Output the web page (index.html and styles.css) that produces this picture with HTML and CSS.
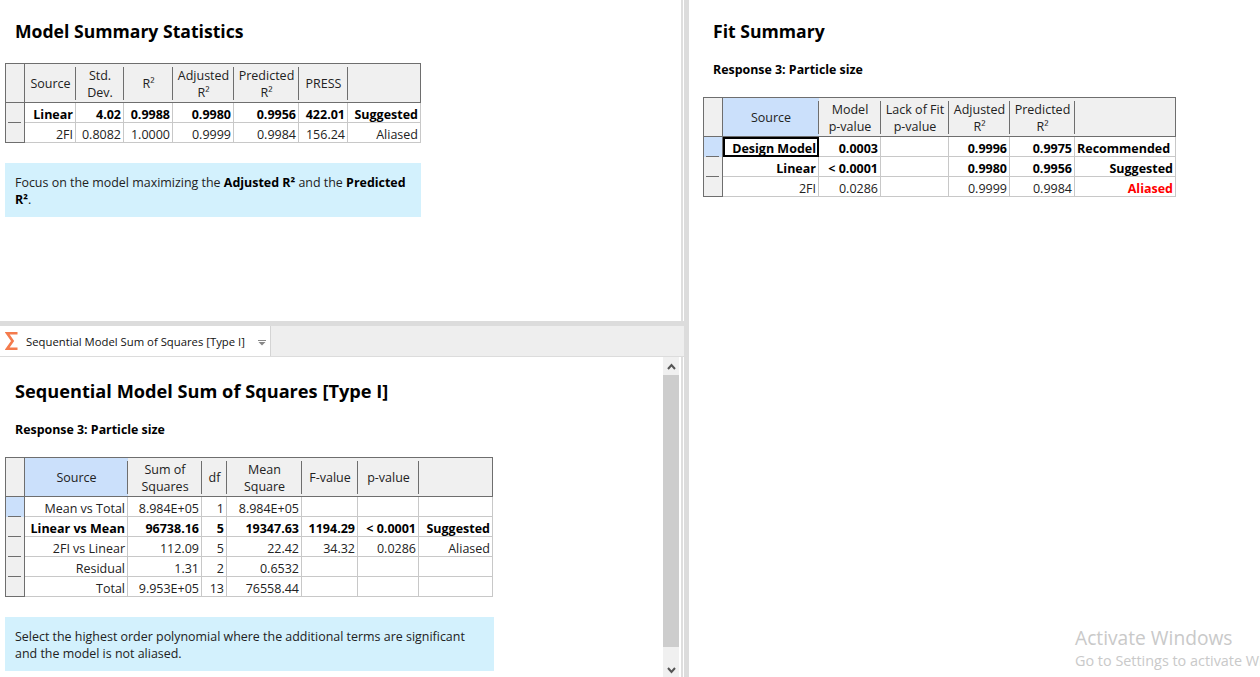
FILE: index.html
```html
<!DOCTYPE html>
<html lang="en">
<head>
<meta charset="utf-8">
<title>Fit Summary</title>
<link rel="stylesheet" href="styles.css">
</head>
<body>
<div class="app">
  <div class="left">
    <section class="pane-top">
      <h1 class="title">Model Summary Statistics</h1>
      <table class="grid grid-a">
        <colgroup><col><col><col><col><col><col><col><col></colgroup>
        <thead><tr><th class="corner"></th><th>Source</th><th>Std.<br>Dev.</th><th>R²</th><th>Adjusted<br>R²</th><th>Predicted<br>R²</th><th>PRESS</th><th class="end"></th></tr></thead>
        <tbody>
          <tr class="b"><th class="rh"></th><td>Linear</td><td>4.02</td><td>0.9988</td><td>0.9980</td><td>0.9956</td><td>422.01</td><td>Suggested</td></tr>
          <tr><th class="rh last"></th><td>2FI</td><td>0.8082</td><td>1.0000</td><td>0.9999</td><td>0.9984</td><td>156.24</td><td>Aliased</td></tr>
        </tbody>
      </table>
      <p class="note note-a">Focus on the model maximizing the <b>Adjusted R²</b> and the <b>Predicted</b> <b>R²</b>.</p>
    </section>
    <div class="hsplit"></div>
    <div class="tabbar">
      <div class="tab">
        <svg class="sigma" width="14" height="18" viewBox="0 0 14 18"><path d="M12.5 1.3H2.2L7.6 9L2.2 16.7H12.5" fill="none" stroke="#f47b4d" stroke-width="2.6"/></svg>
        <span class="tab-label">Sequential Model Sum of Squares [Type I]</span>
        <svg class="caret" width="8" height="6" viewBox="0 0 8 6"><path d="M0 0.5H8" stroke="#888" stroke-width="1"/><path d="M0.5 2H7.5L4 5.5Z" fill="#888"/></svg>
      </div>
    </div>
    <div class="pane-bottom">
      <section class="scroll-body">
        <h1 class="title title-b">Sequential Model Sum of Squares [Type I]</h1>
        <h2 class="response">Response 3: Particle size</h2>
        <table class="grid grid-c">
          <colgroup><col><col><col><col><col><col><col><col></colgroup>
          <thead><tr><th class="corner"></th><th class="sel">Source</th><th>Sum of<br>Squares</th><th>df</th><th>Mean<br>Square</th><th>F-value</th><th>p-value</th><th class="end"></th></tr></thead>
          <tbody>
            <tr><th class="rh sel"></th><td>Mean vs Total</td><td>8.984E+05</td><td>1</td><td>8.984E+05</td><td></td><td></td><td></td></tr>
            <tr class="b"><th class="rh"></th><td>Linear vs Mean</td><td>96738.16</td><td>5</td><td>19347.63</td><td>1194.29</td><td>&lt; 0.0001</td><td>Suggested</td></tr>
            <tr><th class="rh"></th><td>2FI vs Linear</td><td>112.09</td><td>5</td><td>22.42</td><td>34.32</td><td>0.0286</td><td>Aliased</td></tr>
            <tr><th class="rh"></th><td>Residual</td><td>1.31</td><td>2</td><td>0.6532</td><td></td><td></td><td></td></tr>
            <tr><th class="rh last"></th><td>Total</td><td>9.953E+05</td><td>13</td><td>76558.44</td><td></td><td></td><td></td></tr>
          </tbody>
        </table>
        <p class="note note-c">Select the highest order polynomial where the additional terms are significant and the model is not aliased.</p>
      </section>
      <div class="scrollbar">
        <div class="sb-btn"><svg width="9" height="7" viewBox="0 0 9 7"><path d="M1 6L4.5 2L8 6" fill="none" stroke="#555" stroke-width="2"/></svg></div>
        <div class="sb-thumb"></div>
        <div class="sb-track"><svg width="9" height="7" viewBox="0 0 9 7"><path d="M1 1L4.5 5L8 1" fill="none" stroke="#555" stroke-width="2"/></svg></div>
      </div>
    </div>
  </div>
  <div class="vsplit"></div>
  <section class="right">
    <h1 class="title">Fit Summary</h1>
    <h2 class="response">Response 3: Particle size</h2>
    <table class="grid grid-b">
      <colgroup><col><col><col><col><col><col><col></colgroup>
      <thead><tr><th class="corner"></th><th class="sel">Source</th><th>Model<br>p-value</th><th>Lack of Fit<br>p-value</th><th>Adjusted<br>R²</th><th>Predicted<br>R²</th><th class="end"></th></tr></thead>
      <tbody>
        <tr class="b"><th class="rh sel"></th><td class="focus">Design Model</td><td>0.0003</td><td></td><td>0.9996</td><td>0.9975</td><td class="left-text">Recommended</td></tr>
        <tr class="b"><th class="rh"></th><td>Linear</td><td>&lt; 0.0001</td><td></td><td>0.9980</td><td>0.9956</td><td>Suggested</td></tr>
        <tr><th class="rh last"></th><td>2FI</td><td>0.0286</td><td></td><td>0.9999</td><td>0.9984</td><td class="alert">Aliased</td></tr>
      </tbody>
    </table>
  </section>
</div>
<div class="watermark">
  <div class="wm-big">Activate Windows</div>
  <div class="wm-small">Go to Settings to activate Windows.</div>
</div>
</body>
</html>
```
FILE: styles.css
```css
* { box-sizing: border-box; }
html, body { margin: 0; height: 100%; }
body {
  width: 1260px;
  height: 677px;
  overflow: hidden;
  position: relative;
  background: #fff;
  color: #1a1a1a;
  font-family: "Open Sans", "Noto Sans", sans-serif;
  font-size: 12px;
}
.app { display: flex; width: 1260px; height: 677px; }
.left { width: 684px; flex: none; display: flex; flex-direction: column; }
.vsplit { width: 5px; flex: none; background: #dcdcdc; }
.right { flex: 1; padding-left: 14px; min-width: 0; }
.pane-top {
  height: 321px;
  flex: none;
  padding-left: 5px;
  background: linear-gradient(#dedede, #dedede) 681px 0 / 2px 100% no-repeat;
}
.hsplit { height: 5px; flex: none; background: #dcdcdc; }
.tabbar { height: 31px; flex: none; background: #eeeeee; border-bottom: 1px solid #dcdcdc; display: flex; }
.tab { width: 271px; height: 30px; background: #fff; border-right: 1px solid #d4d4d4; display: flex; align-items: center; padding-left: 5px; }
.sigma { flex: none; margin-top: -1px; }
.tab-label { margin-left: 7px; font-size: 11.3px; color: #111; white-space: nowrap; width: 232px; }
.caret { flex: none; margin-top: 4px; }
.pane-bottom {
  height: 320px;
  flex: none;
  display: flex;
  background: linear-gradient(#dedede, #dedede) 681px 0 / 2px 100% no-repeat;
}
.scroll-body { width: 663px; flex: none; padding-left: 5px; overflow: hidden; background: #fff; }
.scrollbar { width: 16px; flex: none; display: flex; flex-direction: column; background: #f0f0f0; }
.sb-btn { height: 18px; display: flex; align-items: center; justify-content: center; flex: none; }
.sb-thumb { height: 272px; background: #cdcdcd; flex: none; }
.sb-track { flex: 1; display: flex; align-items: flex-end; justify-content: center; padding-bottom: 3px; }
.title { margin: 0; padding: 21px 0 22px 10px; font-size: 17.6px; line-height: 20px; font-weight: 700; color: #000; white-space: nowrap; }
.right .title { padding-bottom: 20px; }
.title-b { padding-top: 24px; padding-bottom: 20px; font-size: 18.2px; }
.response { margin: 0 0 19px; padding: 1px 0 0 10px; font-size: 12.4px; line-height: 16px; font-weight: 700; color: #000; }
.grid {
  border-collapse: separate;
  border-spacing: 0;
  table-layout: fixed;
  font-size: 12.5px;
  line-height: 17px;
  border-top: 1px solid #6e6e6e;
  border-left: 1px solid #6e6e6e;
  background: #fff;
}
.grid-a { width: 416px; }
.grid-b { width: 473px; }
.grid-c { width: 488px; }
.grid-a col:nth-child(1), .grid-b col:nth-child(1), .grid-c col:nth-child(1) { width: 19px; }
.grid-a col:nth-child(2) { width: 51px; }
.grid-a col:nth-child(3) { width: 48px; }
.grid-a col:nth-child(4) { width: 49px; }
.grid-a col:nth-child(5) { width: 61px; }
.grid-a col:nth-child(6) { width: 65px; }
.grid-a col:nth-child(7) { width: 49px; }
.grid-a col:nth-child(8) { width: 73px; }
.grid-b col:nth-child(2) { width: 96px; }
.grid-b col:nth-child(3) { width: 62px; }
.grid-b col:nth-child(4) { width: 68px; }
.grid-b col:nth-child(5) { width: 61px; }
.grid-b col:nth-child(6) { width: 65px; }
.grid-b col:nth-child(7) { width: 101px; }
.grid-c col:nth-child(2) { width: 103px; }
.grid-c col:nth-child(3) { width: 74px; }
.grid-c col:nth-child(4) { width: 25px; }
.grid-c col:nth-child(5) { width: 75px; }
.grid-c col:nth-child(6) { width: 56px; }
.grid-c col:nth-child(7) { width: 61px; }
.grid-c col:nth-child(8) { width: 74px; }
.grid thead th {
  height: 39px;
  padding: 1px 0 0;
  font-weight: 400;
  text-align: center;
  background: linear-gradient(#6e6e6e, #6e6e6e) right center / 1px 33px no-repeat, #f0f0f0;
  border-bottom: 1px solid #6e6e6e;
  color: #222;
  white-space: nowrap;
}
.grid thead th.sel { background: linear-gradient(#6e6e6e, #6e6e6e) right center / 1px 33px no-repeat, #cbe0fb; }
.grid thead th.end { background: #f0f0f0; border-right: 1px solid #6e6e6e; }
.grid tbody td {
  height: 20px;
  padding: 4px 2px 0 0;
  line-height: 15px;
  text-align: right;
  white-space: nowrap;
  border-right: 1px solid #c8c8c8;
  border-bottom: 1px solid #c8c8c8;
  color: #222;
  overflow: hidden;
}
.grid tbody tr.b td { font-weight: 700; color: #000; }
.grid tbody th.rh {
  height: 20px;
  padding: 0;
  background: linear-gradient(#6e6e6e, #6e6e6e) 2px bottom / 13px 1px no-repeat, #f0f0f0;
  border-right: 1px solid #6e6e6e;
}
.grid tbody th.rh.sel { background: linear-gradient(#6e6e6e, #6e6e6e) 2px bottom / 13px 1px no-repeat, #cbe0fb; }
.grid tbody th.rh.last { background: #f0f0f0; border-bottom: 1px solid #6e6e6e; }
.grid thead th.corner { background: linear-gradient(#6e6e6e, #6e6e6e) right center / 1px 100% no-repeat, #f0f0f0; }
.grid tbody td.focus { outline: 2px solid #000; outline-offset: -2px; }
.grid tbody td.left-text { text-align: left; padding-left: 2px; }
.grid tbody td.alert { color: #f00; font-weight: 700; }
.note { margin: 20px 0 0; background: #d3f1fd; padding: 11px 10px 0; line-height: 17px; font-size: 12.45px; height: 54px; color: #222; }
.note b { color: #000; }
.note-a { width: 416px; }
.note-c { width: 489px; }
.watermark { position: absolute; left: 1075px; top: 625px; white-space: nowrap; color: #c9c9c9; }
.wm-big { font-size: 19.2px; line-height: 26px; }
.wm-small { font-size: 14.4px; line-height: 20px; }
```
